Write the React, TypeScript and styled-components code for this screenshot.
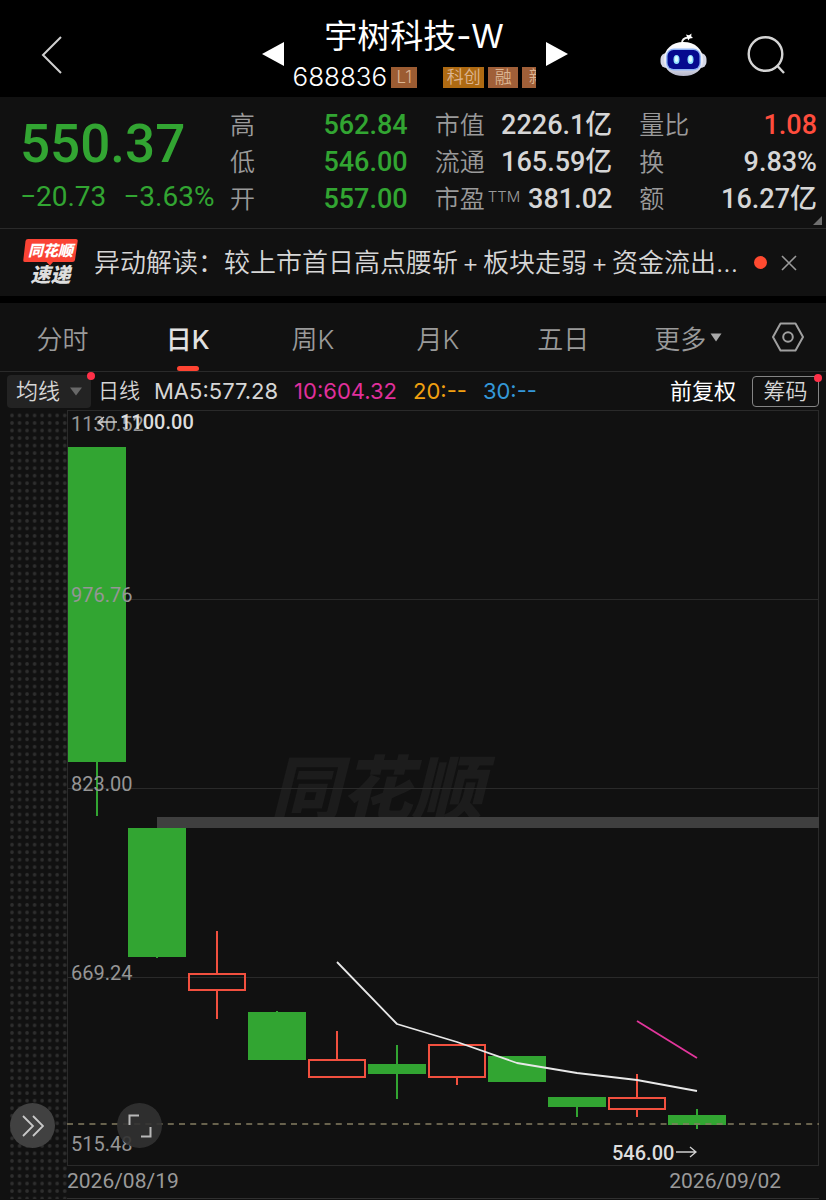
import React from "react";
import styled, { createGlobalStyle } from "styled-components";

const colors = {
  panel: "#111111",
  line: "#2a2a2a",
  green: "#32a532",
  red: "#ff4d3d",
  text: "#d6d6d6",
  muted: "#9a9a9a",
};

const textFont = `Inter, "Noto Sans CJK SC", sans-serif`;
const numberFont = `Roboto, "Noto Sans CJK SC", sans-serif`;

const GlobalStyle = createGlobalStyle`
  * { box-sizing: border-box; }
  body { margin: 0; background: ${colors.panel}; color: ${colors.text}; font-family: ${textFont}; font-weight: 350; }
  button, select { font: inherit; color: inherit; background: none; border: 0; padding: 0; margin: 0; }
  button { cursor: pointer; }
  svg { display: block; }
`;

/* ---------- header ---------- */

const Header = styled.header`
  display: grid;
  grid-template-columns: 1fr auto 1fr;
  height: 97px;
  padding: 0 38px 0 41px;
  background: #000;
`;
const HeaderSide = styled.div<{ $end?: boolean }>`
  display: flex;
  align-items: center;
  justify-content: ${(p) => (p.$end ? "flex-end" : "flex-start")};
  gap: 39px;
  height: 110px;
  padding-right: ${(p) => (p.$end ? "3px" : "0")};
`;
const StockSwitcher = styled.div`
  display: flex;
  align-items: center;
  height: 108px;
`;
const StockTitle = styled.div`
  display: flex;
  flex-direction: column;
  gap: 8px;
  width: 262px;
  height: 74px;
  padding: 0 10px 0 9px;
`;
const StockName = styled.h1`
  margin: 0;
  font-size: 33px;
  line-height: 38px;
  font-weight: 400;
  color: #fff;
  text-align: center;
  white-space: nowrap;
`;
const CodeRow = styled.div`
  display: flex;
  align-items: center;
  gap: 4px;
  height: 28px;
  overflow: hidden;
`;
const StockCode = styled.span`
  font-size: 26px;
  line-height: 28px;
  font-weight: 350;
  color: #fff;
`;
const Tag = styled.span<{ $bg: string; $width: number; $pushed?: boolean }>`
  flex: none;
  width: ${(p) => p.$width}px;
  height: 21px;
  margin-right: ${(p) => (p.$pushed ? "22px" : "0")};
  font-size: 17px;
  line-height: 21px;
  text-align: center;
  color: #dcb592;
  background: ${(p) => p.$bg};
`;

/* ---------- quote ---------- */

const Quote = styled.section`
  position: relative;
  display: grid;
  grid-template-columns: 183px 1fr 1fr 1fr;
  column-gap: 27px;
  padding: 10px 9px 10px 20px;
  border-bottom: 1px solid ${colors.line};
`;
const PriceBlock = styled.div`
  color: ${colors.green};
  font-family: ${numberFont};
  font-weight: 500;
  white-space: nowrap;
`;
const Price = styled.div`
  font-size: 53px;
  line-height: 74px;
`;
const Change = styled.div`
  display: flex;
  gap: 17px;
  font-size: 28px;
  line-height: 32px;
  font-weight: 400;
`;
const Stats = styled.dl`
  margin: 0;
`;
const Stat = styled.div`
  display: flex;
  justify-content: space-between;
  height: 37px;
  line-height: 37px;
  white-space: nowrap;
`;
const StatLabel = styled.dt`
  font-size: 25px;
  color: ${colors.muted};
`;
const Super = styled.sup`
  margin-left: 3px;
  font-size: 15px;
  line-height: 15px;
  vertical-align: 6px;
`;
const StatValue = styled.dd<{ $color?: string }>`
  margin: 0;
  font-family: ${numberFont};
  font-size: 27px;
  font-weight: 500;
  color: ${(p) => p.$color ?? colors.text};
`;
const Corner = styled.svg`
  position: absolute;
  right: 4px;
  bottom: 3px;
`;

/* ---------- news ---------- */

const News = styled.section`
  display: flex;
  align-items: center;
  height: 74px;
  padding: 0 30px 0 22px;
  border-bottom: 7px solid #000;
`;
const NewsBadge = styled.div`
  display: flex;
  flex-direction: column;
  align-items: center;
  gap: 2px;
  flex: none;
  width: 57px;
  font-style: italic;
  font-weight: 900;
  color: #fff;
`;
const BadgeTop = styled.span`
  position: relative;
  width: 55px;
  height: 24px;
  font-size: 15px;
  line-height: 23px;
  text-align: center;
  z-index: 0;
`;
const BadgeShape = styled.svg`
  position: absolute;
  inset: 0;
  z-index: -1;
`;
const BadgeBottom = styled.span`
  font-size: 20px;
  line-height: 21px;
  color: #dedede;
`;
const NewsLink = styled.a`
  flex: 1;
  margin-left: 15px;
  font-size: 26px;
  line-height: 36px;
  color: ${colors.text};
  text-decoration: none;
  white-space: nowrap;
`;
const Plus = styled.span`
  margin: 0 4px;
`;
const UnreadDot = styled.span`
  flex: none;
  width: 13px;
  height: 13px;
  margin: 0 14px 0 16px;
  border-radius: 50%;
  background: #ff4a30;
`;

/* ---------- tabs ---------- */

const Tabs = styled.nav`
  display: grid;
  grid-template-columns: repeat(6, 5fr) 3fr;
  height: 69px;
  border-bottom: 1px solid ${colors.line};
`;
const Tab = styled.button<{ $active?: boolean }>`
  position: relative;
  display: flex;
  align-items: center;
  justify-content: center;
  gap: 4px;
  font-size: 26px;
  font-weight: ${(p) => (p.$active ? 500 : 350)};
  color: ${(p) => (p.$active ? "#e2e2e2" : colors.muted)};
  &::after {
    content: "";
    display: ${(p) => (p.$active ? "block" : "none")};
    position: absolute;
    left: 50%;
    bottom: 0;
    width: 22px;
    height: 5px;
    margin-left: -11px;
    border-radius: 3px;
    background: #ff4432;
  }
`;

/* ---------- indicator row ---------- */

const Indicators = styled.div`
  display: flex;
  align-items: center;
  height: 38px;
  padding: 0 7px;
  font-size: 22px;
  line-height: 32px;
  font-weight: 400;
  white-space: nowrap;
`;
const SelectWrap = styled.label`
  position: relative;
  flex: none;
  width: 84px;
  height: 33px;
  margin-right: 7px;
  border-radius: 4px;
  background: #232323;
`;
const IndicatorSelect = styled.select`
  appearance: none;
  width: 100%;
  height: 100%;
  padding-left: 9px;
  font-weight: 350;
  outline: 0;
`;
const SelectArrow = styled.svg`
  position: absolute;
  right: 9px;
  top: 12px;
  pointer-events: none;
`;
const RedDot = styled.span`
  position: absolute;
  top: -3px;
  right: -4px;
  width: 8px;
  height: 8px;
  border-radius: 50%;
  background: #ff3048;
`;
const Period = styled.span`
  margin-right: 14px;
  font-size: 21px;
  font-weight: 350;
`;
const MaValue = styled.span<{ $color: string }>`
  margin-right: 16px;
  color: ${(p) => p.$color};
`;
const Adjust = styled.button`
  margin-left: auto;
  color: #fff;
`;
const ChipButton = styled.button`
  position: relative;
  width: 67px;
  height: 31px;
  margin-left: 16px;
  border: 1px solid #858585;
  border-radius: 4px;
  font-weight: 350;
  line-height: 28px;
`;

/* ---------- chart ---------- */

const ChartArea = styled.main`
  position: relative;
  display: grid;
  grid-template-columns: 67px 1fr 7px;
`;
const Gutter = styled.div`
  position: relative;
  overflow: hidden;
`;
const DotField = styled.svg`
  position: absolute;
  inset: 0;
`;
const Plot = styled.svg`
  width: 100%;
  height: auto;
  overflow: visible;
`;
const ChartColumn = styled.div`
  border-bottom: 1px solid #303030;
`;
const Dates = styled.div`
  display: flex;
  justify-content: space-between;
  height: 32px;
  padding-right: 38px;
  font-family: ${numberFont};
  font-size: 21px;
  line-height: 31px;
  font-weight: 400;
  color: ${colors.muted};
`;
const RoundButton = styled.button<{ $left: number; $bg: string }>`
  position: absolute;
  left: ${(p) => p.$left}px;
  bottom: 51px;
  width: 45px;
  height: 45px;
  border-radius: 50%;
  background: ${(p) => p.$bg};
  display: flex;
  align-items: center;
  justify-content: center;
`;

type StatRow = { label: string; sup?: string; value: string; color?: string };

const stats: StatRow[][] = [
  [
    { label: "高", value: "562.84", color: colors.green },
    { label: "低", value: "546.00", color: colors.green },
    { label: "开", value: "557.00", color: colors.green },
  ],
  [
    { label: "市值", value: "2226.1亿" },
    { label: "流通", value: "165.59亿" },
    { label: "市盈", sup: "TTM", value: "381.02" },
  ],
  [
    { label: "量比", value: "1.08", color: colors.red },
    { label: "换", value: "9.83%" },
    { label: "额", value: "16.27亿" },
  ],
];

/* Plot coordinates: body top/bottom and wick top/bottom per trading day. */
type Candle = { up?: boolean; top: number; bottom: number; high: number; low: number };

const candles: Candle[] = [
  { top: 37, bottom: 352, high: 37, low: 406 },
  { top: 418, bottom: 547, high: 418, low: 548 },
  { up: true, top: 563, bottom: 581, high: 521, low: 609 },
  { top: 602, bottom: 650, high: 601, low: 650 },
  { up: true, top: 649, bottom: 668, high: 621, low: 668 },
  { top: 654, bottom: 664, high: 635, low: 689 },
  { up: true, top: 634, bottom: 668, high: 634, low: 675 },
  { top: 646, bottom: 672, high: 646, low: 672 },
  { top: 687, bottom: 697, high: 687, low: 707 },
  { up: true, top: 687, bottom: 700, high: 664, low: 707 },
  { top: 705, bottom: 715, high: 699, low: 719 },
];
const dayX = (i: number) => 30 + i * 60;

const axisLabels = [
  { text: "1130.52", y: 21 },
  { text: "976.76", y: 192 },
  { text: "823.00", y: 381 },
  { text: "669.24", y: 570 },
  { text: "515.48", y: 741 },
];

function CandleShape({ candle, x }: { candle: Candle; x: number }) {
  const { up, top, bottom, high, low } = candle;
  const color = up ? "#f2503f" : colors.green;
  return (
    <g stroke={color} strokeWidth={2}>
      {high < top && <line x1={x} x2={x} y1={high} y2={top} />}
      {low > bottom && <line x1={x} x2={x} y1={bottom} y2={low} />}
      {up ? (
        <rect x={x - 28} y={top + 1} width={56} height={bottom - top - 2} fill="none" />
      ) : (
        <rect x={x - 29} y={top} width={58} height={bottom - top} fill={color} stroke="none" />
      )}
    </g>
  );
}

function KLineChart() {
  return (
    <Plot viewBox="0 0 752 756" role="img" aria-label="日K线图">
      <text x="203" y="405" fontFamily={textFont} fontSize="71" fontWeight="900" fontStyle="italic" fill="#1c1c1c">
        同花顺
      </text>
      <g stroke={colors.line} shapeRendering="crispEdges">
        <rect x="0.5" y="0.5" width="751" height="755" fill="none" />
        <path d="M0 189.5H752M0 378.5H752M0 567.5H752" />
      </g>
      <rect x="90" y="407" width="662" height="11" fill="#3f3f3f" />
      {candles.map((candle, i) => (
        <CandleShape key={i} candle={candle} x={dayX(i)} />
      ))}
      <g fontFamily={numberFont} fontSize="20" fontWeight="400" fill="#969696">
        {axisLabels.map((label) => (
          <text key={label.text} x="4" y={label.y}>
            {label.text}
          </text>
        ))}
      </g>
      <path d="M0 714H752" stroke="#857d62" strokeWidth="1.4" strokeDasharray="6 5.2" />
      <g fill="none" strokeWidth="1.8" strokeLinejoin="round">
        <path d="M270 552L330 614L390 632L450 653L510 663L570 670L630 681" stroke="#e8e8e8" />
        <path d="M570 611L630 648" stroke="#e2369c" />
      </g>
      <g fontFamily={numberFont} fontSize="20" fontWeight="500" fill="#dddddd">
        <text x="53" y="19">1100.00</text>
        <text x="545" y="750">546.00</text>
      </g>
      <g fill="none" stroke="#d0d0d0" strokeWidth="1.3">
        <path d="M31 12H50M37 7L31 12L37 17" />
        <path d="M609 742H629M623 737L629 742L623 747" />
      </g>
    </Plot>
  );
}

function RobotIcon() {
  return (
    <svg width="48" height="44" viewBox="0 0 48 44" aria-hidden="true">
      <defs>
        <linearGradient id="shell" x1="0" y1="0" x2="0" y2="1">
          <stop offset="0" stopColor="#ffffff" />
          <stop offset="0.7" stopColor="#e4e6f4" />
          <stop offset="1" stopColor="#b4b5c8" />
        </linearGradient>
      </defs>
      <path d="M22 10C22 6.500 24 5 28 4.500" fill="none" stroke="#f2f2f2" strokeWidth="1.800" />
      <path d="M26 1.500L29 2.300L31.500 0.500L31.200 3.300L33 5L29.800 5.600L28.200 7.500L27.300 4.500Z" fill="#fff" />
      <rect x="0.500" y="20" width="46" height="15" rx="6" fill="#d5d7e6" />
      <path d="M23.500 9C35 9 43 16 43 27C43 37 35 43 23.500 43S4 37 4 27C4 16 12 9 23.500 9Z" fill="url(#shell)" />
      <rect x="6" y="15.500" width="35" height="22" rx="8" fill="#8fb4f5" />
      <rect x="7.500" y="17" width="32" height="19" rx="6" fill="#060a8f" />
      <ellipse cx="16.500" cy="26.500" rx="3" ry="4.500" fill="#8fe0ff" />
      <ellipse cx="30.500" cy="26.500" rx="3" ry="4.500" fill="#8fe0ff" />
      <ellipse cx="16.500" cy="26" rx="1.600" ry="3" fill="#e0fbff" />
      <ellipse cx="30.500" cy="26" rx="1.600" ry="3" fill="#e0fbff" />
    </svg>
  );
}

function DownTriangle({ width, height, color }: { width: number; height: number; color: string }) {
  return (
    <svg width={width} height={height} viewBox="0 0 12 9" aria-hidden="true">
      <path d="M0.500 0.500H11.500L6 8.500Z" fill={color} />
    </svg>
  );
}

export default function App() {
  return (
    <>
      <GlobalStyle />
      <Header>
        <HeaderSide>
          <button aria-label="返回">
            <svg width="22" height="38" viewBox="0 0 22 38">
              <path d="M20 1L2 19L20 37" fill="none" stroke="#d0d0d0" strokeWidth="2" />
            </svg>
          </button>
        </HeaderSide>
        <StockSwitcher>
          <button aria-label="上一只">
            <svg width="22" height="24" viewBox="0 0 22 24">
              <path d="M22 0V24L0 12Z" fill="#fff" />
            </svg>
          </button>
          <StockTitle>
            <StockName>宇树科技-W</StockName>
            <CodeRow>
              <StockCode>688836</StockCode>
              <Tag $bg="#9c5c32" $width={26} $pushed>L1</Tag>
              <Tag $bg="#ae6a12" $width={41}>科创</Tag>
              <Tag $bg="#a05f38" $width={30}>融</Tag>
              <Tag $bg="#a05f38" $width={30}>新</Tag>
            </CodeRow>
          </StockTitle>
          <button aria-label="下一只">
            <svg width="22" height="24" viewBox="0 0 22 24">
              <path d="M0 0V24L22 12Z" fill="#fff" />
            </svg>
          </button>
        </StockSwitcher>
        <HeaderSide $end>
          <button aria-label="智能助手">
            <RobotIcon />
          </button>
          <button aria-label="搜索">
            <svg width="38" height="38" viewBox="0 0 38 38">
              <g fill="none" stroke="#d4d4d4" strokeWidth="2.400">
                <circle cx="18.500" cy="18" r="16.800" />
                <path d="M30 29.500L37 37" />
              </g>
            </svg>
          </button>
        </HeaderSide>
      </Header>

      <Quote>
        <PriceBlock>
          <Price>550.37</Price>
          <Change>
            <span>−20.73</span>
            <span>−3.63%</span>
          </Change>
        </PriceBlock>
        {stats.map((column, i) => (
          <Stats key={i}>
            {column.map((row) => (
              <Stat key={row.label}>
                <StatLabel>
                  {row.label}
                  {row.sup && <Super>{row.sup}</Super>}
                </StatLabel>
                <StatValue $color={row.color}>{row.value}</StatValue>
              </Stat>
            ))}
          </Stats>
        ))}
        <Corner width="9" height="9" viewBox="0 0 9 9" aria-hidden="true">
          <path d="M9 0V9H0Z" fill="#707070" />
        </Corner>
      </Quote>

      <News>
        <NewsBadge>
          <BadgeTop>
            <BadgeShape width="55" height="27" viewBox="0 0 55 27" aria-hidden="true">
              <path d="M5 0H53Q55 0 54.700 2L52 21Q51.700 23 49.500 23H30L27 26.500L23.500 23H2Q0 23 0.300 21L2.500 2Q2.800 0 5 0Z" fill="#fa4335" />
            </BadgeShape>
            同花顺
          </BadgeTop>
          <BadgeBottom>速递</BadgeBottom>
        </NewsBadge>
        <NewsLink href="#news">
          异动解读：较上市首日高点腰斩<Plus>+</Plus>板块走弱<Plus>+</Plus>资金流出...
        </NewsLink>
        <UnreadDot />
        <button aria-label="关闭">
          <svg width="16" height="16" viewBox="0 0 16 16">
            <path d="M1 1L15 15M15 1L1 15" fill="none" stroke="#9a9a9a" strokeWidth="1.600" />
          </svg>
        </button>
      </News>

      <Tabs>
        <Tab>分时</Tab>
        <Tab $active>日K</Tab>
        <Tab>周K</Tab>
        <Tab>月K</Tab>
        <Tab>五日</Tab>
        <Tab>
          更多
          <DownTriangle width={12} height={9} color="#a8a8a8" />
        </Tab>
        <Tab aria-label="设置">
          <svg width="32" height="30" viewBox="0 0 32 30">
            <g fill="none" stroke="#a0a0a0" strokeWidth="2">
              <path d="M8.500 1.500H23.500L31 15L23.500 28.500H8.500L1 15Z" strokeLinejoin="round" />
              <circle cx="16" cy="15" r="4.800" />
            </g>
          </svg>
        </Tab>
      </Tabs>

      <Indicators>
        <SelectWrap>
          <IndicatorSelect aria-label="指标" defaultValue="均线">
            <option>均线</option>
          </IndicatorSelect>
          <SelectArrow width="12" height="9" viewBox="0 0 12 9" aria-hidden="true">
            <path d="M0 0.500H12L6 8.500Z" fill="#686868" />
          </SelectArrow>
          <RedDot />
        </SelectWrap>
        <Period>日线</Period>
        <MaValue $color={colors.text}>MA5:577.28</MaValue>
        <MaValue $color="#e0309c">10:604.32</MaValue>
        <MaValue $color="#f0a010">20:--</MaValue>
        <MaValue $color="#3498d8">30:--</MaValue>
        <Adjust>前复权</Adjust>
        <ChipButton>
          筹码
          <RedDot />
        </ChipButton>
      </Indicators>

      <ChartArea>
        <Gutter>
          <DotField width="100%" height="100%" aria-hidden="true">
            <defs>
              <pattern id="dots" x="8.250" y="1.700" width="7.530" height="7.530" patternUnits="userSpaceOnUse">
                <circle cx="3.760" cy="3.760" r="1.800" fill="#2e2e2e" />
              </pattern>
            </defs>
            <rect x="9" y="0" width="58" height="100%" fill="url(#dots)" />
          </DotField>
        </Gutter>
        <ChartColumn>
          <KLineChart />
          <Dates>
            <span>2026/08/19</span>
            <span>2026/09/02</span>
          </Dates>
        </ChartColumn>
        <RoundButton $left={10} $bg="#414141" aria-label="展开">
          <svg width="22" height="22" viewBox="0 0 22 22">
            <path d="M1 1L11 11L1 21M11 1L21 11L11 21" fill="none" stroke="#c8c8c8" strokeWidth="1.800" />
          </svg>
        </RoundButton>
        <RoundButton $left={117} $bg="rgba(50, 50, 50, 0.9)" aria-label="全屏">
          <svg width="24" height="24" viewBox="0 0 24 24">
            <path d="M1.500 11V1.500H11M22.500 13V22.500H13" fill="none" stroke="#b8b8b8" strokeWidth="2" />
          </svg>
        </RoundButton>
      </ChartArea>
    </>
  );
}
